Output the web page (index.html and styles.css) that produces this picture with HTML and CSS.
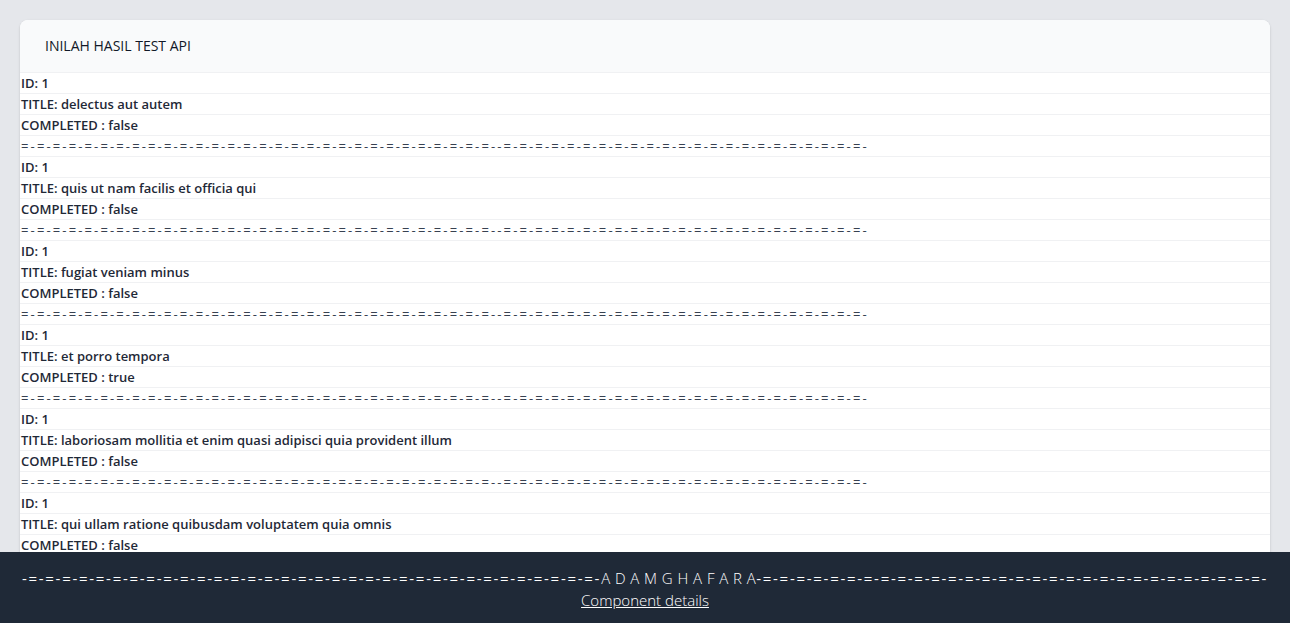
FILE: index.html
```html
<!DOCTYPE html>
<html>
<head>
<meta charset="utf-8">
<link rel="stylesheet" href="styles.css">
</head>
<body>
<main class="page">
  <section class="card">
    <div class="card-head">INILAH HASIL TEST API</div>
    <ul class="list">
      <li>ID: 1</li>
      <li>TITLE: delectus aut autem</li>
      <li>COMPLETED : false</li>
      <li class="sep">=-=-=-=-=-=-=-=-=-=-=-=-=-=-=-=-=-=-=-=-=-=-=-=-=-=-=-=-=-=--=-=-=-=-=-=-=-=-=-=-=-=-=-=-=-=-=-=-=-=-=-=-=-</li>
      <li>ID: 1</li>
      <li>TITLE: quis ut nam facilis et officia qui</li>
      <li>COMPLETED : false</li>
      <li class="sep">=-=-=-=-=-=-=-=-=-=-=-=-=-=-=-=-=-=-=-=-=-=-=-=-=-=-=-=-=-=--=-=-=-=-=-=-=-=-=-=-=-=-=-=-=-=-=-=-=-=-=-=-=-</li>
      <li>ID: 1</li>
      <li>TITLE: fugiat veniam minus</li>
      <li>COMPLETED : false</li>
      <li class="sep">=-=-=-=-=-=-=-=-=-=-=-=-=-=-=-=-=-=-=-=-=-=-=-=-=-=-=-=-=-=--=-=-=-=-=-=-=-=-=-=-=-=-=-=-=-=-=-=-=-=-=-=-=-</li>
      <li>ID: 1</li>
      <li>TITLE: et porro tempora</li>
      <li>COMPLETED : true</li>
      <li class="sep">=-=-=-=-=-=-=-=-=-=-=-=-=-=-=-=-=-=-=-=-=-=-=-=-=-=-=-=-=-=--=-=-=-=-=-=-=-=-=-=-=-=-=-=-=-=-=-=-=-=-=-=-=-</li>
      <li>ID: 1</li>
      <li>TITLE: laboriosam mollitia et enim quasi adipisci quia provident illum</li>
      <li>COMPLETED : false</li>
      <li class="sep">=-=-=-=-=-=-=-=-=-=-=-=-=-=-=-=-=-=-=-=-=-=-=-=-=-=-=-=-=-=--=-=-=-=-=-=-=-=-=-=-=-=-=-=-=-=-=-=-=-=-=-=-=-</li>
      <li>ID: 1</li>
      <li>TITLE: qui ullam ratione quibusdam voluptatem quia omnis</li>
      <li>COMPLETED : false</li>
      <li class="sep">=-=-=-=-=-=-=-=-=-=-=-=-=-=-=-=-=-=-=-=-=-=-=-=-=-=-=-=-=-=--=-=-=-=-=-=-=-=-=-=-=-=-=-=-=-=-=-=-=-=-=-=-=-</li>
    </ul>
  </section>
</main>
<footer class="footer">
  <div class="footer-line"><span class="dash">-=-=-=-=-=-=-=-=-=-=-=-=-=-=-=-=-=-=-=-=-=-=-=-=-=-=-=-=-=-=-=-=-=-=-</span><span class="name">A D A M G H A F A R A</span><span class="dash">-=-=-=-=-=-=-=-=-=-=-=-=-=-=-=-=-=-=-=-=-=-=-=-=-=-=-=-=-=-=-</span></div>
  <div class="footer-line"><a class="footer-link" href="#">Component details</a></div>
</footer>
</body>
</html>
```
FILE: styles.css
```css
* { box-sizing: border-box; }
html, body { margin: 0; padding: 0; }
body {
  background: #e5e7eb;
  font-family: "Open Sans", "Noto Sans", sans-serif;
  color: #1f2937;
  font-size: 14px;
  line-height: 20px;
}
.page {
  padding: 20px 20px 90px;
}
.card {
  background: #ffffff;
  border-radius: 8px 8px 0 0;
  box-shadow: 0 1px 3px rgba(0,0,0,0.12), 0 1px 2px rgba(0,0,0,0.06);
  overflow: hidden;
}
.card-head {
  background: #f9fafb;
  padding: 16px 25px;
  font-size: 14px;
  font-weight: 500;
  color: #111827;
  border-bottom: 1px solid #f0f1f3;
}
.list {
  list-style: none;
  margin: 0;
  padding: 0;
}
.list li {
  padding: 0 1px;
  font-size: 13px;
  font-weight: 600;
  border-bottom: 1px solid #f0f1f3;
  white-space: nowrap;
}
.list li.sep {
  font-weight: 400;
  letter-spacing: 2.13px;
  color: #374151;
}
.footer {
  position: fixed;
  left: 0;
  right: 0;
  bottom: 0;
  height: 71px;
  background: #1f2937;
  color: #ffffff;
  padding-top: 15px;
  font-weight: 300;
  font-size: 15px;
}
.footer-line {
  display: flex;
  justify-content: center;
  line-height: 22px;
  white-space: nowrap;
}
.dash {
  letter-spacing: 1.72px;
  font-weight: 400;
}
.name {
  letter-spacing: 0.45px;
}
.footer-link {
  color: #ffffff;
  text-decoration: underline;
}
```
